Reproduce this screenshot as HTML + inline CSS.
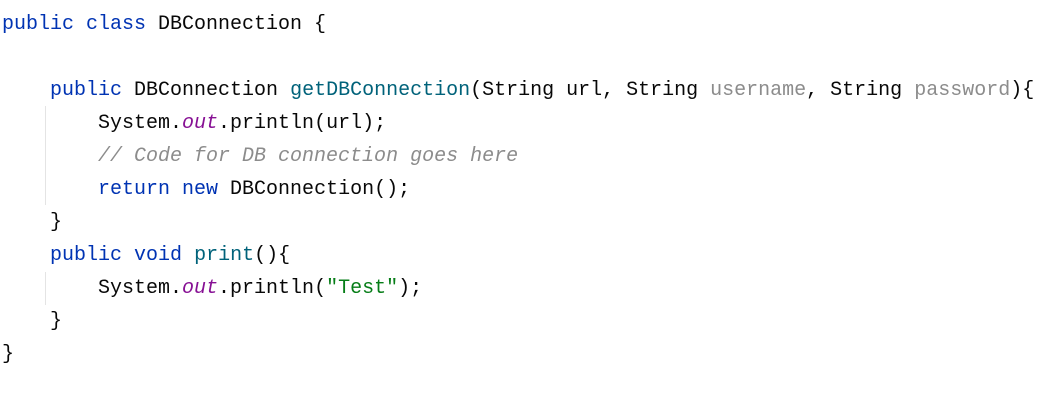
<!DOCTYPE html>
<html><head><meta charset="utf-8"><style>
html,body{margin:0;padding:0;background:#fff;width:1063px;height:420px;overflow:hidden}
pre{margin:0;position:absolute;left:2px;top:8px;font-family:"Liberation Mono",monospace;font-size:20px;line-height:33px;color:#080808}
.k{color:#0033b3}.m{color:#00627a}.p{color:#8c8c8c}.o{color:#871094;font-style:italic}.c{color:#8c8c8c;font-style:italic}.s{color:#067d17}
.g{position:absolute;width:1px;background:#e4e4e4;left:45px}
</style></head><body>
<div class="g" style="top:106px;height:99px"></div>
<div class="g" style="top:272px;height:33px"></div>
<pre><span class="k">public class</span> DBConnection {

    <span class="k">public</span> DBConnection <span class="m">getDBConnection</span>(String url, String <span class="p">username</span>, String <span class="p">password</span>){
        System.<span class="o">out</span>.println(url);
        <span class="c">// Code for DB connection goes here</span>
        <span class="k">return new</span> DBConnection();
    }
    <span class="k">public void</span> <span class="m">print</span>(){
        System.<span class="o">out</span>.println(<span class="s">"Test"</span>);
    }
}</pre>
</body></html>
